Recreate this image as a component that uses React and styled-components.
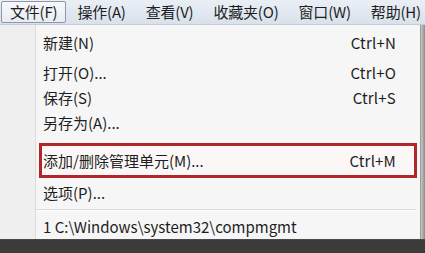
import React from "react";
import styled, { createGlobalStyle } from "styled-components";

const Global = createGlobalStyle`
  html, body { margin: 0; padding: 0; overflow: hidden; background: #3b3b3b; }
  * { box-sizing: border-box; }
`;

const Screen = styled.div`
  width: 425px;
  height: 253px;
  display: flex;
  flex-direction: column;
  font-family: "Noto Sans CJK SC", "Noto Sans", sans-serif;
  font-size: 15px;
  color: #1e1e1e;
  background: #f4f4f4;
`;

const MenuBar = styled.div`
  height: 25px;
  flex: none;
  display: flex;
  align-items: stretch;
  padding: 1px 0 0 1px;
  background: linear-gradient(#eaeff6, #d9e1eb);
  border-bottom: 1px solid #c4ccd7;
  overflow: hidden;
`;

const BarItem = styled.div`
  display: flex;
  align-items: center;
  padding: 0 ${(p) => (p.$active ? 8 : 9)}px 1px;
  margin-right: ${(p) => (p.$active ? 1 : 0)}px;
  white-space: nowrap;
  line-height: 1;
  border: 1px solid ${(p) => (p.$active ? "#8e98a4" : "transparent")};
  border-radius: 2px;
  background: ${(p) => (p.$active ? "linear-gradient(#f6f8fb, #e9edf2)" : "transparent")};
  height: 22px;
  letter-spacing: -0.2px;
`;

const Body = styled.div`
  flex: 1;
  display: flex;
`;

const Menu = styled.div`
  width: 421px;
  display: flex;
  border-right: 1px solid #9a9a9a;
`;

const Gutter = styled.div`
  width: 36px;
  flex: none;
  background: #efefef;
  border-right: 1px solid #dcdcdc;
  box-shadow: 1px 0 0 #ffffff;
`;

const Items = styled.div`
  flex: 1;
  display: flex;
  flex-direction: column;
  padding-top: 1px;
  background: #f6f6f6;
`;

const Row = styled.div`
  height: ${(p) => p.$h}px;
  flex: none;
  display: flex;
  align-items: center;
  justify-content: space-between;
  padding: 0 24px 0 7px;
  white-space: nowrap;
  line-height: 1;
`;

const Highlight = styled.div`
  height: 35px;
  flex: none;
  margin: 0 3px 0 3px;
  border: 3px solid #b0262a;
  background: #fbf7f7;
  display: flex;
  align-items: center;
  justify-content: space-between;
  padding: 0 18px 0 1px;
  white-space: nowrap;
  line-height: 1;
`;

const Spacer = styled.div`
  height: ${(p) => p.$h}px;
  flex: none;
`;

const Separator = styled.div`
  height: 7px;
  flex: none;
  margin: 0 4px 0 0;
  display: flex;
  flex-direction: column;
  justify-content: center;
  &::before {
    content: "";
    display: block;
    height: 1px;
    background: #dadada;
    box-shadow: 0 1px 0 #ffffff;
  }
`;

const Shortcut = styled.span`
  letter-spacing: 0.2px;
`;

const RightStrip = styled.div`
  flex: 1;
  background: linear-gradient(to right, #c8c8c8, #8c8c8c);
`;

const BottomBar = styled.div`
  height: 14px;
  flex: none;
  background: #3b3b3b;
  border-top: 1px solid #4a4a4a;
`;

const bar = ["文件(F)", "操作(A)", "查看(V)", "收藏夹(O)", "窗口(W)", "帮助(H)"];

export default function App() {
  return (
    <Screen>
      <Global />
      <MenuBar>
        {bar.map((t, i) => (
          <BarItem key={t} $active={i === 0}>
            {t}
          </BarItem>
        ))}
      </MenuBar>
      <Body>
        <Menu>
          <Gutter />
          <Items>
            <Row $h={32}>
              <span>新建(N)</span>
              <Shortcut>Ctrl+N</Shortcut>
            </Row>
            <Row $h={28}>
              <span>打开(O)...</span>
              <Shortcut>Ctrl+O</Shortcut>
            </Row>
            <Row $h={23}>
              <span>保存(S)</span>
              <Shortcut>Ctrl+S</Shortcut>
            </Row>
            <Row $h={27}>
              <span>另存为(A)...</span>
            </Row>
            <Spacer $h={7} />
            <Highlight>
              <span>添加/删除管理单元(M)...</span>
              <Shortcut>Ctrl+M</Shortcut>
            </Highlight>
            <Row $h={28}>
              <span>选项(P)...</span>
            </Row>
            <Separator />
            <Row $h={26}>
              <span>1 C:\Windows\system32\compmgmt</span>
            </Row>
          </Items>
        </Menu>
        <RightStrip />
      </Body>
      <BottomBar />
    </Screen>
  );
}
